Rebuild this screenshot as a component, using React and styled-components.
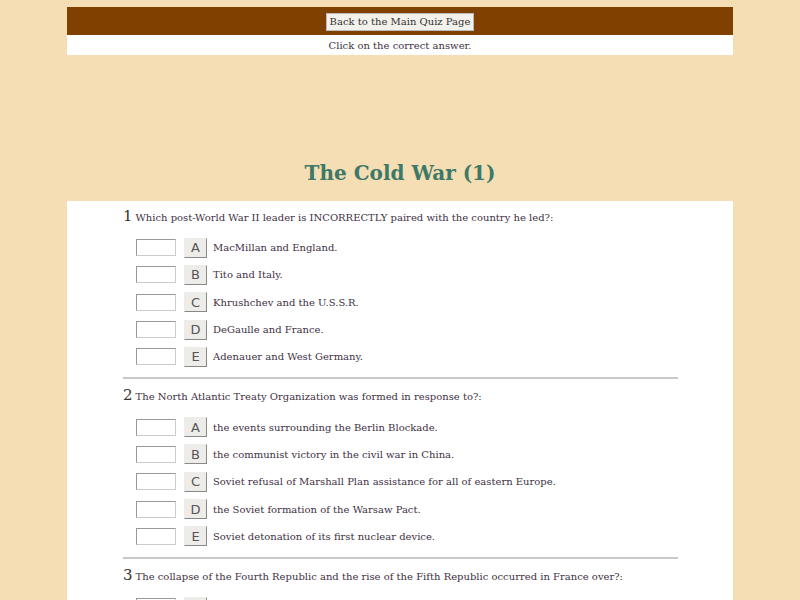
import React from "react";
import styled, { createGlobalStyle } from "styled-components";

const GlobalStyle = createGlobalStyle`
  body {
    margin: 0;
    background: #f5deb3;
    font-family: "DejaVu Serif", serif;
  }
`;

// PAGE WRAPPER
const Page = styled.div`
  width: 666px;
  margin: 7px auto 0;
`;

// TOP NAV BAR
const TopBar = styled.div`
  height: 28px;
  background: #804000;
  display: flex;
  align-items: center;
  justify-content: center;
`;

const BackButton = styled.button`
  font-family: "DejaVu Serif", serif;
  font-size: 10px;
  color: #333;
  background: #f3f1ec;
  border: 1px solid #bbb;
  padding: 2px 3px;
  height: 18px;
  margin-top: 1px;
`;

const Instruction = styled.div`
  height: 20px;
  background: #fff;
  display: flex;
  align-items: center;
  justify-content: center;
  font-size: 10px;
  color: #403040;
`;

const Title = styled.h1`
  margin: 106px 0 0;
  height: 40px;
  text-align: center;
  font-family: "DejaVu Serif", serif;
  font-size: 20px;
  font-weight: bold;
  color: #3d7868;
`;

// QUESTIONS PANEL
const Panel = styled.div`
  background: #fff;
  padding: 0 55px 0 56px;
  min-height: 400px;
`;

const Question = styled.div`
  padding-top: 6px;
`;

const QHead = styled.div`
  display: flex;
  align-items: baseline;
  height: 18px;
  line-height: 18px;
  margin-bottom: 9px;
`;

const QNum = styled.span`
  font-size: 15px;
  color: #333;
  margin-right: 3px;
`;

const QText = styled.span`
  font-size: 10px;
  color: #40303f;
`;

const Answers = styled.div`
  padding-left: 13px;
`;

const Row = styled.div`
  height: 27.3px;
  display: flex;
  align-items: center;
`;

const Box = styled.input`
  width: 40px;
  height: 17px;
  box-sizing: border-box;
  border: 1px solid #ccc;
  border-top-color: #999;
  border-left-color: #999;
  background: #fff;
  margin: 0 8px 0 0;
  padding: 0;
`;

const Letter = styled.button`
  width: 23px;
  height: 20px;
  box-sizing: border-box;
  padding: 0;
  background: #eeece8;
  border: 1px solid #eeece8;
  border-right-color: #888;
  border-bottom-color: #888;
  font-family: "DejaVu Sans", sans-serif;
  font-size: 13px;
  color: #555;
  margin-right: 6px;
`;

const AText = styled.span`
  font-size: 10px;
  color: #40303f;
`;

const Rule = styled.hr`
  margin: 7px 0 1px;
  border: 0;
  border-top: 2px solid #c8c8c8;
`;

const questions = [
  {
    text: "Which post-World War II leader is INCORRECTLY paired with the country he led?:",
    answers: [
      "MacMillan and England.",
      "Tito and Italy.",
      "Khrushchev and the U.S.S.R.",
      "DeGaulle and France.",
      "Adenauer and West Germany.",
    ],
  },
  {
    text: "The North Atlantic Treaty Organization was formed in response to?:",
    answers: [
      "the events surrounding the Berlin Blockade.",
      "the communist victory in the civil war in China.",
      "Soviet refusal of Marshall Plan assistance for all of eastern Europe.",
      "the Soviet formation of the Warsaw Pact.",
      "Soviet detonation of its first nuclear device.",
    ],
  },
  {
    text: "The collapse of the Fourth Republic and the rise of the Fifth Republic occurred in France over?:",
    answers: [
      "the Algerian crisis.",
      "the Suez crisis.",
      "the Indochina war.",
      "the Common Market.",
      "NATO membership.",
    ],
  },
];

const letters = ["A", "B", "C", "D", "E"];

export default function App() {
  return (
    <>
      <GlobalStyle />
      <Page>
        <TopBar>
          <BackButton>Back to the Main Quiz Page</BackButton>
        </TopBar>
        <Instruction>Click on the correct answer.</Instruction>
        <Title>The Cold War (1)</Title>
        <Panel>
          {questions.map((q, i) => (
            <Question key={i}>
              <QHead>
                <QNum>{i + 1}</QNum>
                <QText>{q.text}</QText>
              </QHead>
              <Answers>
                {q.answers.map((a, j) => (
                  <Row key={j}>
                    <Box type="text" />
                    <Letter>{letters[j]}</Letter>
                    <AText>{a}</AText>
                  </Row>
                ))}
              </Answers>
              <Rule />
            </Question>
          ))}
        </Panel>
      </Page>
    </>
  );
}
